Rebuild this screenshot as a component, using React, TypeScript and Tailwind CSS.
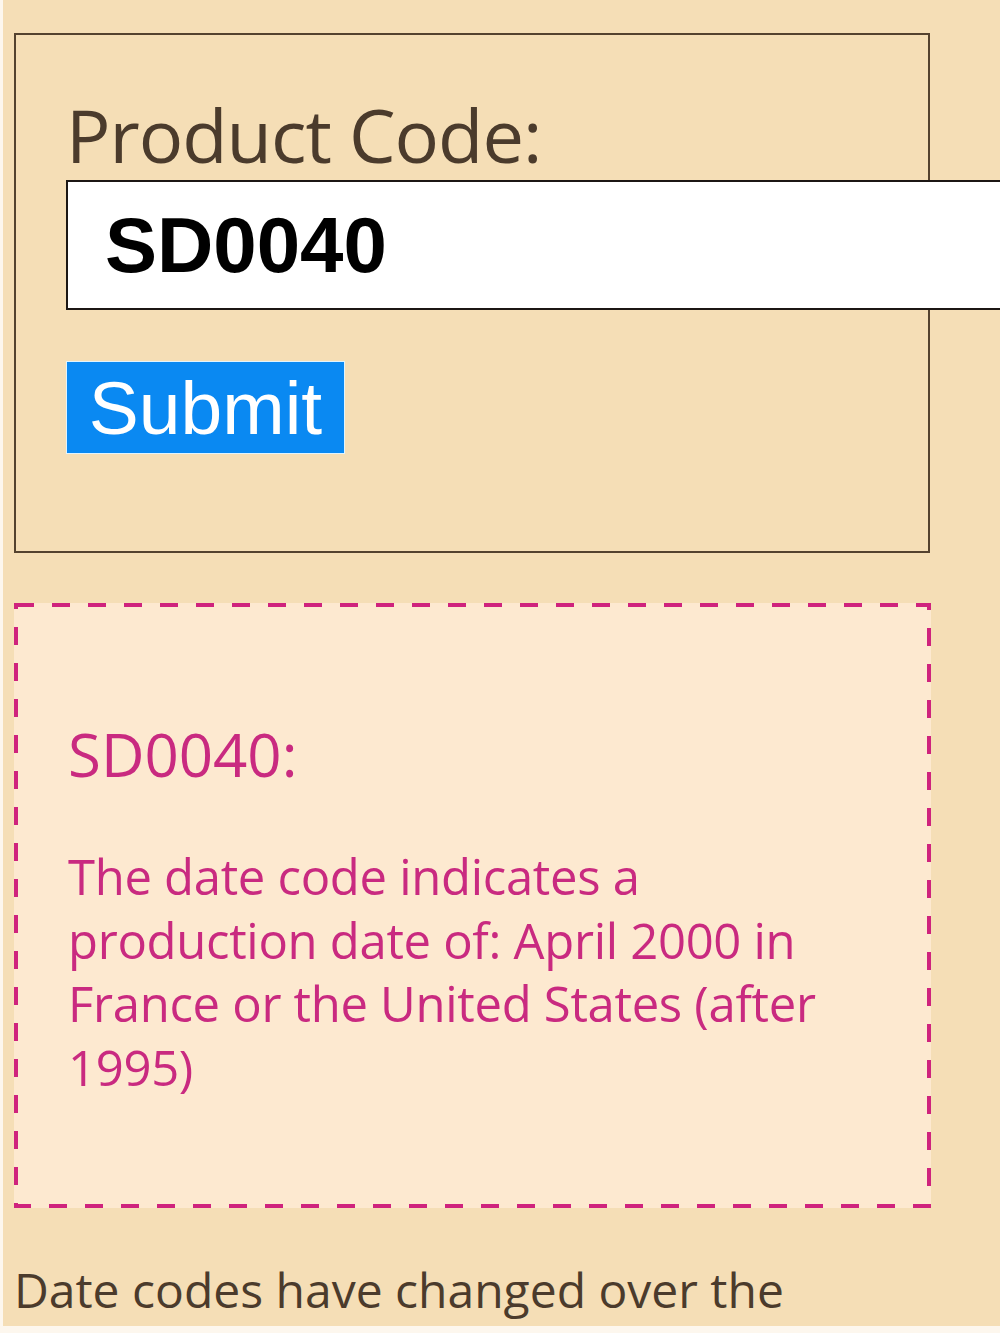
import React, { useState } from "react";

const App = () => {
  const [code, setCode] = useState("SD0040");

  return (
    <div className="w-[1000px] h-[1333px] overflow-hidden bg-[#fdf7ee]">
      <div className="ml-[3px] h-[1326px] overflow-hidden bg-[#f5deb6] pt-[33px] pl-[11px] font-['Open_Sans',sans-serif]">
        {/* lookup form */}
        <form
          className="w-[916px] h-[520px] border-2 border-[#54422f] pt-[70px] pl-[50px]"
          onSubmit={(e) => e.preventDefault()}
        >
          <label
            htmlFor="code"
            className="block text-[74px] leading-[60px] text-[#4b3b2c] -tracking-[1px]"
          >
            Product Code:
          </label>
          <input
            id="code"
            value={code}
            onChange={(e) => setCode(e.target.value)}
            className="mt-[15px] block w-[960px] h-[130px] bg-white border-2 border-[#1c1714] pl-[37px] text-[78px] font-bold text-black font-['Liberation_Sans',Arial,sans-serif] outline-none"
          />
          <button
            type="submit"
            className="mt-[51px] block w-[279px] h-[93px] bg-[#0a89f2] border border-[#dff4ff] text-white text-[75px] leading-[88px] font-['Liberation_Sans',Arial,sans-serif]"
          >
            Submit
          </button>
        </form>

        {/* result */}
        <div className="relative mt-[50px] w-[917px] h-[605px] bg-[#fde9d0] pl-[54px] pt-[116px] text-[#c92a80]">
          <svg className="absolute inset-0 pointer-events-none" width="917" height="605">
            <rect
              x="2"
              y="2"
              width="913"
              height="601"
              fill="none"
              stroke="#cf237d"
              strokeWidth="4"
              strokeDasharray="18 18"
            />
          </svg>
          <div className="text-[60px] leading-[70px]">SD0040:</div>
          <p className="mt-[56px] w-[790px] text-[49px] leading-[63.5px] -tracking-[0.3px]">
            The date code indicates a production date of: April 2000 in France or the United States (after 1995)
          </p>
        </div>

        <p className="mt-[50px] text-[48px] leading-[64px] text-[#4b3b2c]">
          Date codes have changed over the
        </p>
      </div>
    </div>
  );
};

export default App;
